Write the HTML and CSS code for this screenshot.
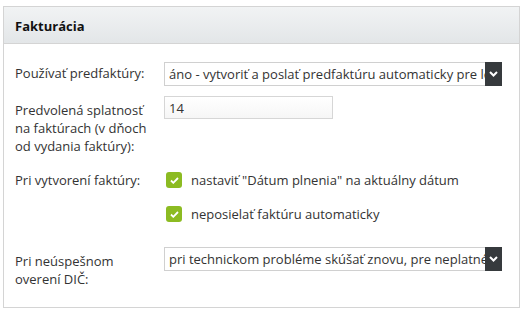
FILE: index.html
```html
<!DOCTYPE html>
<html lang="sk">
  <head>
    <meta charset="UTF-8" />
    <title>Fakturácia</title>
    <link rel="stylesheet" href="styles.css">
  </head>
  <body>
    <section class="panel">
      <div class="panel-head"><h3>Fakturácia</h3></div>
      <form class="panel-body">
        <div class="row row-first">
          <label class="row-label">Používať predfaktúry:</label>
          <div class="select-wrap">
            <select name="proforma">
              <option>áno - vytvoriť a poslať predfaktúru automaticky pre lepšiu kontrolu platieb</option>
            </select>
            <span class="select-arrow"><svg width="9" height="6" viewBox="0 0 9 6"><path d="M1 1l3.5 3.5L8 1" fill="none" stroke="#fff" stroke-width="2"/></svg></span>
          </div>
        </div>
        <div class="row row-due">
          <label class="row-label">Predvolená splatnosť na faktúrach (v dňoch od vydania faktúry):</label>
          <div><input type="text" class="text-input" value="14" /></div>
        </div>
        <div class="row row-checks">
          <label class="row-label">Pri vytvorení faktúry:</label>
          <div class="checks">
            <label class="check"><span class="check-box"><svg width="9" height="7" viewBox="0 0 9 7"><path d="M1 3.5l2.3 2.3L8 1" fill="none" stroke="#fff" stroke-width="1.8"/></svg></span> nastaviť "Dátum plnenia" na aktuálny dátum</label>
            <label class="check"><span class="check-box"><svg width="9" height="7" viewBox="0 0 9 7"><path d="M1 3.5l2.3 2.3L8 1" fill="none" stroke="#fff" stroke-width="1.8"/></svg></span> neposielať faktúru automaticky</label>
          </div>
        </div>
        <div class="row row-vat">
          <label class="row-label">Pri neúspešnom<br>overení DIČ:</label>
          <div class="select-wrap">
            <select name="vat_check">
              <option>pri technickom probléme skúšať znovu, pre neplatné DIČ nevytvoriť faktúru</option>
            </select>
            <span class="select-arrow"><svg width="9" height="6" viewBox="0 0 9 6"><path d="M1 1l3.5 3.5L8 1" fill="none" stroke="#fff" stroke-width="2"/></svg></span>
          </div>
        </div>
      </form>
    </section>
  </body>
</html>
```

FILE: styles.css
```css
:root {
  --border: #d4d4d4;
  --text: #333;
  --green: #8cbb22;
  --dark: #363a3d;
}
* { box-sizing: border-box; margin: 0; padding: 0; }
body { background: #fff; font-family: "Open Sans", sans-serif; font-size: 13px; line-height: 18px; color: var(--text); }

.panel { width: 517px; height: 302px; margin: 6px 0 0 3px; border: 1px solid var(--border); }
.panel-head { height: 37px; padding: 10px 11px 0; background: linear-gradient(#f1f3f4, #e3e6e8); border-bottom: 1px solid var(--border); }
.panel-head h3 { font-size: 13px; font-weight: 700; color: #111; }

.panel-body { padding: 18px 17px 0 11px; }
.row { display: grid; grid-template-columns: 149px 1fr; align-items: start; }
.row-first { margin-bottom: 10px; }
.row-first .row-label { padding-top: 2px; }

.select-wrap { position: relative; height: 24px; }
.select-wrap select { width: 100%; height: 24px; padding: 0 0 0 4px; border: 1px solid #d0d0d0; background: #fff; font: inherit; color: var(--text); appearance: none; -webkit-appearance: none; }
.select-arrow { position: absolute; top: 0; right: 0; width: 17px; height: 24px; background: var(--dark); display: flex; align-items: center; justify-content: center; }

.row-due .row-label { padding-top: 5px; padding-right: 8px; }
.text-input { width: 169px; height: 23px; padding: 0 4px; border: 1px solid #d6d6d6; background: linear-gradient(#fff, #f6f6f6); font: inherit; color: var(--text); }

.row-checks { margin-top: 16px; margin-bottom: 24px; }
.checks { display: flex; flex-direction: column; gap: 16px; padding-left: 2px; }
.check { display: flex; align-items: center; gap: 9px; height: 18px; }
.check-box { width: 16px; height: 16px; border-radius: 3px; background: var(--green); display: flex; align-items: center; justify-content: center; }

.row-vat .row-label { padding-top: 5px; }
```
